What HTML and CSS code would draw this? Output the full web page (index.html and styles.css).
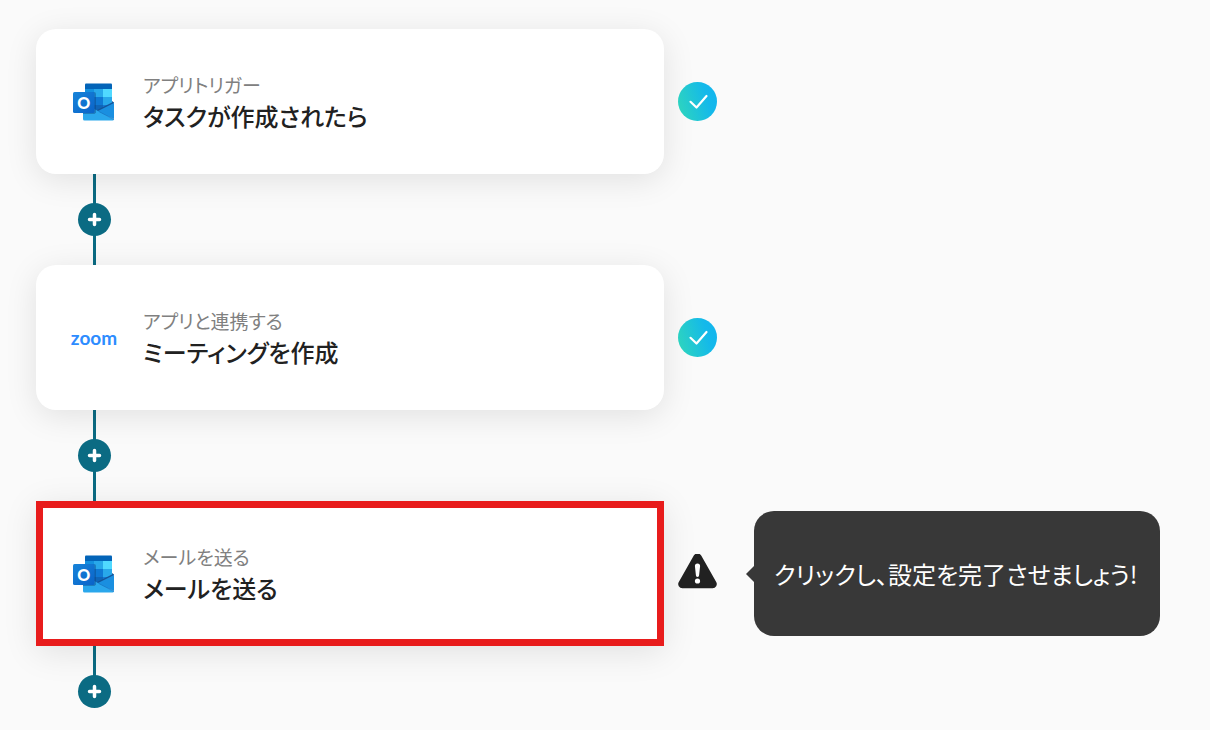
FILE: index.html
```html
<!DOCTYPE html>
<html lang="ja">
<head>
    <meta charset="UTF-8">
    <meta name="viewport" content="width=device-width, initial-scale=1.0">
    <title>フロー設定</title>
    <link rel="stylesheet" href="styles.css">
</head>
<body>

    <!-- Shared icons -->
    <svg class="icon-defs" aria-hidden="true">
        <defs>
            <linearGradient id="check-fill" x1="0" y1="0.65" x2="1" y2="0.35">
                <stop offset="0" stop-color="#2dd4bf"/>
                <stop offset="0.75" stop-color="#14b9ea"/>
                <stop offset="1" stop-color="#12b5ee"/>
            </linearGradient>
            <linearGradient id="outlook-tile" x1="0" y1="0" x2="1" y2="1">
                <stop offset="0" stop-color="#1784d9"/>
                <stop offset="1" stop-color="#0a63c9"/>
            </linearGradient>
            <symbol id="icon-outlook" viewBox="0 0 42 38">
                <path d="M12 1.500a1 1 0 0 1 1-1h25a1 1 0 0 1 1 1V26H12z" fill="#0364b8"/>
                <path d="M12 6h9v8h-9z" fill="#1490df"/>
                <path d="M21 6h9v8h-9z" fill="#28a8ea"/>
                <path d="M30 6h9v8h-9z" fill="#50d9ff"/>
                <path d="M12 14h9v8h-9z" fill="#0f65b8"/>
                <path d="M21 14h9v8h-9z" fill="#0f78d4"/>
                <path d="M30 14h9v8h-9z" fill="#28a8ea"/>
                <path d="M12 22h9v8h-9z" fill="#0a3f80"/>
                <path d="M21 22h9v8h-9z" fill="#0f65b8"/>
                <path d="M30 22h9v8h-9z" fill="#1478d4"/>
                <path d="M39 18l2 1.500v1L26 29l-3-1.500 16-8z" fill="#14549a"/>
                <path d="M41 20v16L24 28.500z" fill="#1a8fe0"/>
                <path d="M10 20l31 16.500a1.500 1.500 0 0 1-1.500 1h-28A1.500 1.500 0 0 1 10 36z" fill="#2aa7ec"/>
                <path d="M25.500 28.300L41 36.500" fill="none" stroke="#1576c4" stroke-width=".8"/>
                <path d="M10 9h11a2 2 0 0 1 2 2v18.500l-1.500 1.500H10z" fill="#0b3f78" opacity=".4"/>
                <rect x="0" y="9" width="21.500" height="21" rx="1.500" fill="url(#outlook-tile)"/>
                <text x="10.750" y="25.500" text-anchor="middle" class="outlook-letter">O</text>
            </symbol>
            <symbol id="icon-plus" viewBox="0 0 33 33">
                <path d="M16.500 11.500v10M11.500 16.500h10" fill="none" stroke="#fff" stroke-width="3.500" stroke-linecap="round"/>
            </symbol>
            <symbol id="icon-check" viewBox="0 0 39 39">
                <circle cx="19.500" cy="19.500" r="19.500" fill="url(#check-fill)"/>
                <path d="M12.500 19.800l6 5.700L28.500 14" fill="none" stroke="#fff" stroke-width="2.200" stroke-linecap="round" stroke-linejoin="round"/>
            </symbol>
            <symbol id="icon-warning" viewBox="0 0 39 39">
                <path d="M15.800 1.500a4.300 4.300 0 0 1 7.400 0l15 26.500a4.200 4.200 0 0 1-3.700 6.300h-30A4.200 4.200 0 0 1 .8 28z" fill="#212121"/>
                <path d="M16.900 12a2.600 2.600 0 0 1 5.200 0l-1 9.300a1.600 1.600 0 0 1-3.200 0z" fill="#fff"/>
                <circle cx="19.500" cy="27" r="2.600" fill="#fff"/>
            </symbol>
        </defs>
    </svg>

    <main>
        <ol class="flow">
            <li class="step">
                <div class="step-row">
                    <a class="card" href="#trigger">
                        <span class="app-icon"><svg class="outlook" role="img" aria-label="Outlook"><use href="#icon-outlook"/></svg></span>
                        <span class="card-text">
                            <span class="label">アプリトリガー</span>
                            <span class="title">タスクが作成されたら</span>
                        </span>
                    </a>
                    <svg class="status" role="img" aria-label="設定済み"><use href="#icon-check"/></svg>
                </div>
                <div class="connector">
                    <button type="button" class="add-btn" aria-label="追加"><svg><use href="#icon-plus"/></svg></button>
                </div>
            </li>

            <li class="step">
                <div class="step-row">
                    <a class="card" href="#meeting">
                        <span class="app-icon zoom-logo">zoom</span>
                        <span class="card-text">
                            <span class="label">アプリと連携する</span>
                            <span class="title">ミーティングを作成</span>
                        </span>
                    </a>
                    <svg class="status" role="img" aria-label="設定済み"><use href="#icon-check"/></svg>
                </div>
                <div class="connector">
                    <button type="button" class="add-btn" aria-label="追加"><svg><use href="#icon-plus"/></svg></button>
                </div>
            </li>

            <li class="step">
                <div class="step-row">
                    <a class="card card-active" href="#mail">
                        <span class="app-icon"><svg class="outlook" role="img" aria-label="Outlook"><use href="#icon-outlook"/></svg></span>
                        <span class="card-text">
                            <span class="label">メールを送る</span>
                            <span class="title">メールを送る</span>
                        </span>
                    </a>
                    <svg class="status" role="img" aria-label="未完了"><use href="#icon-warning"/></svg>
                    <div class="bubble" role="note">クリックし、設定を完了させましょう!</div>
                </div>
                <div class="connector connector-last">
                    <button type="button" class="add-btn" aria-label="追加"><svg><use href="#icon-plus"/></svg></button>
                </div>
            </li>
        </ol>
    </main>

</body>
</html>
```
FILE: styles.css
```css
/* General Styles */
* {
    box-sizing: border-box;
}

body {
    margin: 0;
    background-color: #fafafa;
    color: #212121;
    font-family: "Noto Sans CJK JP", sans-serif;
    font-feature-settings: "palt";
}

.icon-defs {
    position: absolute;
    width: 0;
    height: 0;
}

/* Flow */
.flow {
    list-style: none;
    margin: 0;
    padding: 29px 36px 20px;
}

.step-row {
    display: flex;
    align-items: center;
    gap: 14px;
}

/* Cards */
.card {
    flex: 0 1 628px;
    display: flex;
    align-items: center;
    gap: 23px;
    min-height: 145px;
    padding: 16px 32px;
    border-radius: 20px;
    background-color: #fff;
    box-shadow: 0 6px 32px rgba(0, 0, 0, 0.1);
    color: inherit;
    text-decoration: none;
}

.card-active {
    border-radius: 0;
    padding: 16px 25px;
    border: 7px solid #e81c1c;
}

.app-icon {
    flex: none;
    display: flex;
    align-items: center;
    justify-content: center;
    width: 52px;
}

.outlook {
    width: 42px;
    height: 38px;
}

.outlook-letter {
    fill: #fff;
    font: 900 16px Lato, sans-serif;
}

.zoom-logo {
    color: #2d8cff;
    font: 700 19px/24px Lato, sans-serif;
}

.card-text {
    display: flex;
    flex-direction: column;
}

.label {
    color: #808080;
    font-size: 19px;
    line-height: 28px;
}

.title {
    font-size: 24px;
    font-weight: 500;
    line-height: 34px;
}

/* Status icons */
.status {
    flex: none;
    width: 39px;
    height: 39px;
}

/* Connectors */
.connector {
    display: flex;
    align-items: center;
    width: 33px;
    height: 91px;
    margin-left: 42px;
    background: linear-gradient(#0b6b83, #0b6b83) center / 3px 100% no-repeat;
}

.connector-last {
    height: 62px;
    align-items: flex-end;
    background-size: 3px 50px;
    background-position: top;
}

.add-btn {
    display: block;
    width: 33px;
    height: 33px;
    padding: 0;
    border: none;
    border-radius: 50%;
    background-color: #0b6b83;
    cursor: pointer;
}

.add-btn svg {
    display: block;
    width: 33px;
    height: 33px;
}

/* Speech bubble */
.bubble {
    position: relative;
    flex: 0 1 406px;
    display: flex;
    align-items: center;
    min-height: 125px;
    margin-left: 23px;
    padding: 16px 20px;
    border-radius: 20px;
    background-color: #383838;
    color: #fff;
    font-size: 24px;
    line-height: 36px;
}

.bubble::before {
    content: "";
    position: absolute;
    top: 50%;
    right: 100%;
    margin-top: -8px;
    border: solid transparent;
    border-width: 8px 8px 8px 0;
    border-right-color: #383838;
}
```
